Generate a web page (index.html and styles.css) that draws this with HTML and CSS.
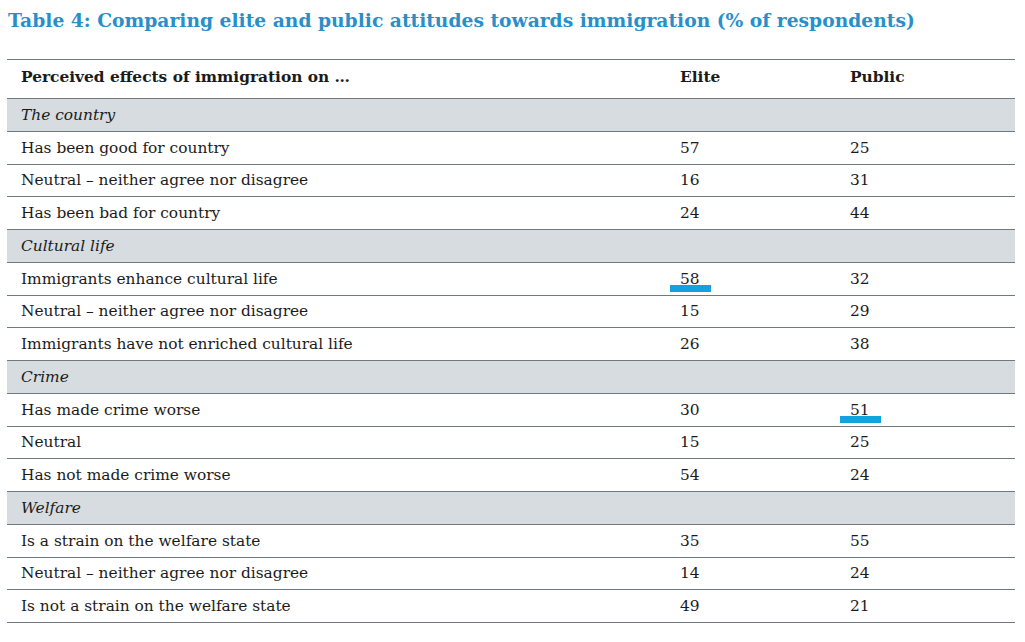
FILE: index.html
```html
<!DOCTYPE html>
<html>
<head>
<meta charset="utf-8">
<link rel="stylesheet" href="styles.css">
</head>
<body>
<div class="page">
  <h1 class="title">Table 4: Comparing elite and public attitudes towards immigration (% of respondents)</h1>
  <table class="data">
    <thead>
      <tr class="head"><th class="c1">Perceived effects of immigration on …</th><th class="c2">Elite</th><th class="c3">Public</th></tr>
    </thead>
    <tbody>
      <tr class="section"><td colspan="3">The country</td></tr>
      <tr><td class="c1">Has been good for country</td><td class="c2">57</td><td class="c3">25</td></tr>
      <tr><td class="c1">Neutral – neither agree nor disagree</td><td class="c2">16</td><td class="c3">31</td></tr>
      <tr><td class="c1">Has been bad for country</td><td class="c2">24</td><td class="c3">44</td></tr>
      <tr class="section"><td colspan="3">Cultural life</td></tr>
      <tr><td class="c1">Immigrants enhance cultural life</td><td class="c2"><span class="mark">58</span></td><td class="c3">32</td></tr>
      <tr><td class="c1">Neutral – neither agree nor disagree</td><td class="c2">15</td><td class="c3">29</td></tr>
      <tr><td class="c1">Immigrants have not enriched cultural life</td><td class="c2">26</td><td class="c3">38</td></tr>
      <tr class="section"><td colspan="3">Crime</td></tr>
      <tr><td class="c1">Has made crime worse</td><td class="c2">30</td><td class="c3"><span class="mark">51</span></td></tr>
      <tr><td class="c1">Neutral</td><td class="c2">15</td><td class="c3">25</td></tr>
      <tr><td class="c1">Has not made crime worse</td><td class="c2">54</td><td class="c3">24</td></tr>
      <tr class="section"><td colspan="3">Welfare</td></tr>
      <tr><td class="c1">Is a strain on the welfare state</td><td class="c2">35</td><td class="c3">55</td></tr>
      <tr><td class="c1">Neutral – neither agree nor disagree</td><td class="c2">14</td><td class="c3">24</td></tr>
      <tr><td class="c1">Is not a strain on the welfare state</td><td class="c2">49</td><td class="c3">21</td></tr>
    </tbody>
  </table>
</div>
</body>
</html>
```
FILE: styles.css
```css
html, body {
  margin: 0;
  padding: 0;
  background: #ffffff;
}
.page {
  padding: 5px 10px 0 7px;
  font-family: "DejaVu Serif", "Liberation Serif", serif;
  color: #1b1b1b;
}
.title {
  margin: 0 0 0 1px;
  font-size: 18.7px;
  line-height: 30px;
  font-weight: bold;
  color: #2a8fc8;
}
.data {
  margin-top: 24px;
  width: 1008px;
  border-collapse: collapse;
  font-size: 15.4px;
  border-top: 1px solid #6f7a80;
}
.data td, .data th {
  padding: 0;
  text-align: left;
  border-bottom: 1px solid #6f7a80;
  vertical-align: middle;
}
.head th {
  height: 34px;
  font-weight: bold;
  padding-bottom: 4px;
}
.data tbody td {
  height: 31.75px;
}
.c1 {
  width: 659px;
  padding-left: 14px !important;
}
.c2 {
  width: 170px;
}
.section td {
  background: #d6dcdf;
  font-style: italic;
  padding-left: 14px !important;
}
.mark {
  position: relative;
  display: inline-block;
}
.mark::after {
  content: "";
  position: absolute;
  left: -10px;
  right: -11px;
  bottom: -4px;
  height: 7px;
  background: #12a2df;
}
```
